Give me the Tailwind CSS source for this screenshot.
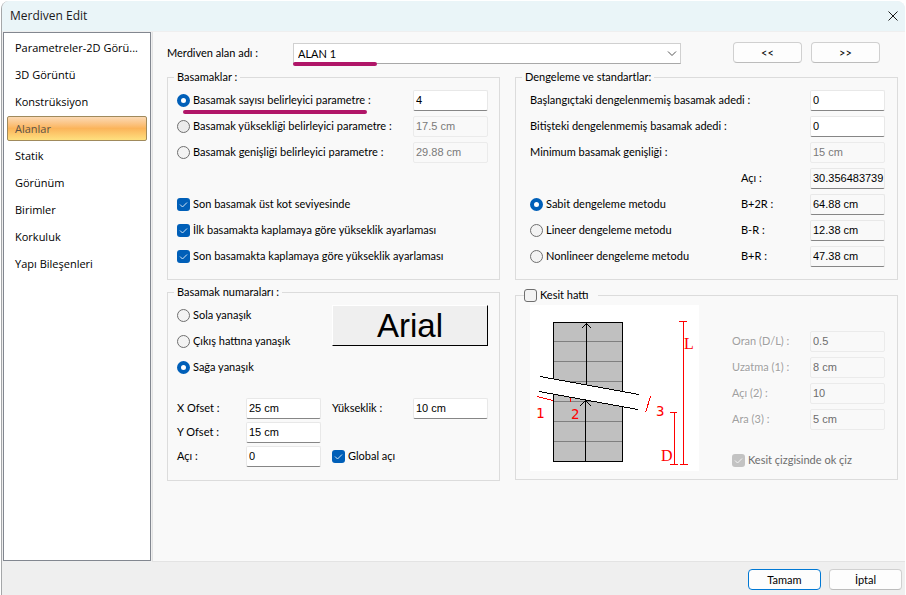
<!DOCTYPE html>
<html lang="tr">
  <head>
    <meta charset="UTF-8" />
    <meta name="viewport" content="width=device-width, initial-scale=1.0" />
    <title>Merdiven Edit</title>
    <script src="https://cdn.jsdelivr.net/npm/@tailwindcss/browser@4"></script>
  </head>
  <body class="h-screen overflow-hidden bg-white pt-px pr-px pl-px text-[11px] leading-4 text-black font-[Lato,'Liberation_Sans',sans-serif]">
    <div class="flex h-full flex-col overflow-hidden rounded-t-lg border-l border-[#a5a7a9] bg-[#efefef]">
      <!-- title bar -->
      <header class="flex h-[30px] shrink-0 items-center justify-between bg-[#eaf5f8] pr-[6px] pl-2 font-['Open_Sans','Noto_Sans',sans-serif]">
        <h1 class="text-xs text-[#1a1a1a]">Merdiven Edit</h1>
        <button type="button" aria-label="Kapat" class="p-px">
          <svg class="size-[10px]" viewBox="0 0 10 10" fill="none" stroke="#1a1a1a"><path d="M0.5 0.5l9 9M9.5 0.5l-9 9" /></svg>
        </button>
      </header>

      <div class="flex min-h-0 flex-1 pt-px pl-px">
        <nav class="mb-px flex w-[148px] shrink-0 flex-col gap-[2px] border border-[#828790] bg-white px-[3px] py-[2px] font-['Open_Sans','Noto_Sans',sans-serif]">
          <a href="#" class="flex h-[25px] items-center px-2">Parametreler-2D Görü...</a>
          <a href="#" class="flex h-[25px] items-center px-2">3D Görüntü</a>
          <a href="#" class="flex h-[25px] items-center px-2">Konstrüksiyon</a>
          <a href="#" aria-current="page" class="flex h-[25px] items-center rounded-xs border border-[#a08a5c] bg-linear-to-b from-[#fbd9b3] via-[#fbb45a] to-[#fee07f] px-[7px] text-[#5c5347]">Alanlar</a>
          <a href="#" class="flex h-[25px] items-center px-2">Statik</a>
          <a href="#" class="flex h-[25px] items-center px-2">Görünüm</a>
          <a href="#" class="flex h-[25px] items-center px-2">Birimler</a>
          <a href="#" class="flex h-[25px] items-center px-2">Korkuluk</a>
          <a href="#" class="flex h-[25px] items-center px-2">Yapı Bileşenleri</a>
        </nav>

        <main class="ml-px min-w-0 flex-1 border-b border-l border-[#e3e3e3] bg-[#f9f9f9] pr-[7px] pl-[14px] [&_input]:font-['Liberation_Sans',Arial,sans-serif]">
          <div class="flex h-[37px] items-start pt-[10px] pr-[18px]">
            <label for="area" class="w-[126px] pt-[3px]">Merdiven alan adı :</label>
            <div class="relative mt-px mr-[52px] flex-1">
              <select id="area" class="block h-[21px] w-full appearance-none border border-[#d0d0d0] border-b-[#a8a8a8] bg-white pl-1">
                <option>ALAN 1</option>
              </select>
              <svg class="pointer-events-none absolute top-2 right-1 h-[6px] w-[10px]" viewBox="0 0 10 6" fill="none" stroke="#555"><path d="M1 0.5l4 4l4-4" /></svg>
              <div class="absolute top-[19px] left-0 h-1 w-[84px] rounded-full bg-[#b01668]"></div>
            </div>
            <button type="button" class="h-[21px] w-[69px] rounded border border-[#d0d0d0] border-b-[#bcbcbc] bg-[#fdfdfd]">&lt;&lt;</button>
            <button type="button" class="ml-[9px] h-[21px] w-[69px] rounded border border-[#d0d0d0] border-b-[#bcbcbc] bg-[#fdfdfd]">&gt;&gt;</button>
          </div>

          <div class="grid grid-cols-[333fr_383fr] gap-x-[15px]">
            <div class="flex flex-col gap-1">
              <fieldset class="min-w-0 border border-[#dcdcdc] pt-[2px] pr-[11px] pb-[10px] pl-[9px]">
                <legend class="-ml-[3px] px-[3px]">Basamaklar :</legend>
                <div class="relative flex h-[26px] items-center">
                  <input type="radio" name="param" id="p1" checked class="mr-[3px] size-[13px] appearance-none rounded-full border border-[#6f6f6f] bg-[#f3f3f3] checked:border-4 checked:border-[#005fb8] checked:bg-white" />
                  <label for="p1" class="flex-1">Basamak sayısı belirleyici parametre :</label>
                  <input aria-label="Basamak sayısı" value="4" class="h-[21px] w-[75px] rounded-xs border border-[#e8e8e8] border-b-[#868686] bg-white pl-[2px]" />
                  <div class="absolute top-[23px] left-[6px] h-1 w-[184px] rounded-full bg-[#b01668]"></div>
                </div>
                <div class="flex h-[26px] items-center">
                  <input type="radio" name="param" id="p2" class="mr-[3px] size-[13px] appearance-none rounded-full border border-[#6f6f6f] bg-[#ececec] checked:border-4 checked:border-[#005fb8] checked:bg-white" />
                  <label for="p2" class="flex-1">Basamak yüksekliği belirleyici parametre :</label>
                  <input aria-label="Basamak yüksekliği" value="17.5 cm" disabled class="h-[21px] w-[75px] rounded-xs border border-[#ebebeb] pl-[2px] text-[#7a7a7a]" />
                </div>
                <div class="flex h-[26px] items-center">
                  <input type="radio" name="param" id="p3" class="mr-[3px] size-[13px] appearance-none rounded-full border border-[#6f6f6f] bg-[#f3f3f3] checked:border-4 checked:border-[#005fb8] checked:bg-white" />
                  <label for="p3" class="flex-1">Basamak genişliği belirleyici parametre :</label>
                  <input aria-label="Basamak genişliği" value="29.88 cm" disabled class="h-[21px] w-[75px] rounded-xs border border-[#ebebeb] pl-[2px] text-[#7a7a7a]" />
                </div>
                <div class="mt-[26px] flex h-[26px] items-center gap-[3px]">
                  <span class="grid size-[13px]">
                    <input type="checkbox" id="c1" checked class="size-[13px] appearance-none rounded-[3px] border border-[#6f6f6f] [grid-area:1/1] checked:border-0 checked:bg-[#005fb8]" />
                    <svg class="pointer-events-none size-[13px] [grid-area:1/1]" viewBox="0 0 13 13" fill="none" stroke="#d5e6f5"><path d="M3 6.5l2.5 2.5L10 4.5" /></svg>
                  </span>
                  <label for="c1">Son basamak üst kot seviyesinde</label>
                </div>
                <div class="flex h-[26px] items-center gap-[3px]">
                  <span class="grid size-[13px]">
                    <input type="checkbox" id="c2" checked class="size-[13px] appearance-none rounded-[3px] border border-[#6f6f6f] [grid-area:1/1] checked:border-0 checked:bg-[#005fb8]" />
                    <svg class="pointer-events-none size-[13px] [grid-area:1/1]" viewBox="0 0 13 13" fill="none" stroke="#d5e6f5"><path d="M3 6.5l2.5 2.5L10 4.5" /></svg>
                  </span>
                  <label for="c2">İlk basamakta kaplamaya göre yükseklik ayarlaması</label>
                </div>
                <div class="flex h-[26px] items-center gap-[3px]">
                  <span class="grid size-[13px]">
                    <input type="checkbox" id="c3" checked class="size-[13px] appearance-none rounded-[3px] border border-[#6f6f6f] [grid-area:1/1] checked:border-0 checked:bg-[#005fb8]" />
                    <svg class="pointer-events-none size-[13px] [grid-area:1/1]" viewBox="0 0 13 13" fill="none" stroke="#d5e6f5"><path d="M3 6.5l2.5 2.5L10 4.5" /></svg>
                  </span>
                  <label for="c3">Son basamakta kaplamaya göre yükseklik ayarlaması</label>
                </div>
              </fieldset>

              <fieldset class="min-w-0 border border-[#dcdcdc] pt-[2px] pr-[11px] pb-3 pl-[9px]">
                <legend class="-ml-[3px] px-[3px]">Basamak numaraları :</legend>
                <div class="flex items-start justify-between">
                  <div>
                    <div class="flex h-[26px] items-center gap-[3px]">
                      <input type="radio" name="align" id="a1" class="size-[13px] appearance-none rounded-full border border-[#6f6f6f] bg-[#f3f3f3] checked:border-4 checked:border-[#005fb8] checked:bg-white" />
                      <label for="a1">Sola yanaşık</label>
                    </div>
                    <div class="flex h-[26px] items-center gap-[3px]">
                      <input type="radio" name="align" id="a2" class="size-[13px] appearance-none rounded-full border border-[#6f6f6f] bg-[#f3f3f3] checked:border-4 checked:border-[#005fb8] checked:bg-white" />
                      <label for="a2">Çıkış hattına yanaşık</label>
                    </div>
                    <div class="flex h-[26px] items-center gap-[3px]">
                      <input type="radio" name="align" id="a3" checked class="size-[13px] appearance-none rounded-full border border-[#6f6f6f] bg-[#f3f3f3] checked:border-4 checked:border-[#005fb8] checked:bg-white" />
                      <label for="a3">Sağa yanaşık</label>
                    </div>
                  </div>
                  <button type="button" class="mt-[3px] h-[41px] w-[156px] border border-white border-r-black border-b-black bg-[#efefef] font-['Liberation_Sans',Arial,sans-serif] text-[33px] leading-9">Arial</button>
                </div>
                <div class="mt-4 grid auto-rows-[24px] grid-cols-[69px_75px_1fr_75px] items-center">
                  <label for="xo">X Ofset :</label>
                  <input id="xo" value="25 cm" class="h-[21px] w-[75px] rounded-xs border border-[#e8e8e8] border-b-[#868686] bg-white pl-[2px]" />
                  <label for="yk" class="pl-[11px]">Yükseklik :</label>
                  <input id="yk" value="10 cm" class="h-[21px] w-[75px] rounded-xs border border-[#e8e8e8] border-b-[#868686] bg-white pl-[2px]" />
                  <label for="yo">Y Ofset :</label>
                  <input id="yo" value="15 cm" class="col-span-3 h-[21px] w-[75px] rounded-xs border border-[#e8e8e8] border-b-[#868686] bg-white pl-[2px]" />
                  <label for="ac">Açı :</label>
                  <input id="ac" value="0" class="h-[21px] w-[75px] rounded-xs border border-[#e8e8e8] border-b-[#868686] bg-white pl-[2px]" />
                  <div class="col-span-2 flex items-center gap-[3px] pl-[11px]">
                    <span class="grid size-[13px]">
                      <input type="checkbox" id="ga" checked class="size-[13px] appearance-none rounded-[3px] border border-[#6f6f6f] [grid-area:1/1] checked:border-0 checked:bg-[#005fb8]" />
                      <svg class="pointer-events-none size-[13px] [grid-area:1/1]" viewBox="0 0 13 13" fill="none" stroke="#d5e6f5"><path d="M3 6.5l2.5 2.5L10 4.5" /></svg>
                    </span>
                    <label for="ga">Global açı</label>
                  </div>
                </div>
              </fieldset>
            </div>

            <div class="flex flex-col gap-[7px]">
              <fieldset class="min-w-0 border border-[#dcdcdc] pt-[2px] pr-3 pb-[10px] pl-[14px]">
                <legend class="-ml-[8px] px-[3px]">Dengeleme ve standartlar:</legend>
                <div class="flex h-[26px] items-center justify-between">
                  <label for="d1">Başlangıçtaki dengelenmemiş basamak adedi :</label>
                  <input id="d1" value="0" class="h-[21px] w-[75px] rounded-xs border border-[#e8e8e8] border-b-[#868686] bg-white pl-[2px]" />
                </div>
                <div class="flex h-[26px] items-center justify-between">
                  <label for="d2">Bitişteki dengelenmemiş basamak adedi :</label>
                  <input id="d2" value="0" class="h-[21px] w-[75px] rounded-xs border border-[#e8e8e8] border-b-[#868686] bg-white pl-[2px]" />
                </div>
                <div class="flex h-[26px] items-center justify-between">
                  <label for="d3">Minimum basamak genişliği :</label>
                  <input id="d3" value="15 cm" disabled class="h-[21px] w-[75px] rounded-xs border border-[#ebebeb] pl-[2px] text-[#7a7a7a]" />
                </div>
                <div class="flex h-[26px] items-center justify-end">
                  <label for="r1" class="w-[69px]">Açı :</label>
                  <input id="r1" value="30.356483739" readonly class="h-[21px] w-[75px] rounded-xs border border-[#e8e8e8] border-b-[#868686] pl-[2px]" />
                </div>
                <div class="flex h-[26px] items-center">
                  <input type="radio" name="method" id="m1" checked class="mr-[3px] size-[13px] appearance-none rounded-full border border-[#6f6f6f] bg-[#f3f3f3] checked:border-4 checked:border-[#005fb8] checked:bg-white" />
                  <label for="m1" class="flex-1">Sabit dengeleme metodu</label>
                  <label for="r2" class="w-[69px]">B+2R :</label>
                  <input id="r2" value="64.88 cm" readonly class="h-[21px] w-[75px] rounded-xs border border-[#e8e8e8] border-b-[#868686] pl-[2px]" />
                </div>
                <div class="flex h-[26px] items-center">
                  <input type="radio" name="method" id="m2" class="mr-[3px] size-[13px] appearance-none rounded-full border border-[#6f6f6f] bg-[#f3f3f3] checked:border-4 checked:border-[#005fb8] checked:bg-white" />
                  <label for="m2" class="flex-1">Lineer dengeleme metodu</label>
                  <label for="r3" class="w-[69px]">B-R :</label>
                  <input id="r3" value="12.38 cm" readonly class="h-[21px] w-[75px] rounded-xs border border-[#e8e8e8] border-b-[#868686] pl-[2px]" />
                </div>
                <div class="flex h-[26px] items-center">
                  <input type="radio" name="method" id="m3" class="mr-[3px] size-[13px] appearance-none rounded-full border border-[#6f6f6f] bg-[#f3f3f3] checked:border-4 checked:border-[#005fb8] checked:bg-white" />
                  <label for="m3" class="flex-1">Nonlineer dengeleme metodu</label>
                  <label for="r4" class="w-[69px]">B+R :</label>
                  <input id="r4" value="47.38 cm" readonly class="h-[21px] w-[75px] rounded-xs border border-[#e8e8e8] border-b-[#868686] pl-[2px]" />
                </div>
              </fieldset>

              <fieldset class="min-w-0 border border-[#dcdcdc] pt-[2px] pr-3 pb-[6px] pl-[14px]">
                <legend class="-ml-[6px] pr-[9px]">
                  <span class="flex items-center gap-[3px]">
                    <input type="checkbox" id="kh" class="size-[13px] appearance-none rounded-[3px] border border-[#6f6f6f] bg-[#f3f3f3] checked:bg-[#005fb8]" />
                    <label for="kh">Kesit hattı</label>
                  </span>
                </legend>
                <div class="flex justify-between">
                  <!-- section line diagram -->
                  <svg class="h-[166px] w-[169px] bg-white" viewBox="0 0 169 166" fill="none" shape-rendering="crispEdges">
                    <path d="M23.5 17.5H92.5V86.5L23.5 73.5ZM23.5 88.5L92.5 101.5V156.5H23.5Z" fill="#c0c0c0" />
                    <path d="M24 36.5H92M24 56.5H92M40 76.5H92M24 96.5H66M24 116.5H92M24 136.5H92" stroke="#808080" />
                    <path d="M23.5 74V17.5H92.5V86M23.5 89V156.5H92.5V102M56.5 80V18M51.5 23.5l5-5l5 5M55.5 156V96M49.5 101.5l6-6l6 6M10 71.5L109 89.5M9 86.5L108 104.5" stroke="#000" />
                    <path d="M7 91.5L23 95.5M40.5 93V97M120.5 91.5L115.5 107.5M149 16.5H157M153.5 16V159.5M140 107.5H147M144.5 107V159.5M140 159.5H148M150 159.5H158" stroke="#f00" />
                    <g fill="#f00" class="font-['DejaVu_Sans_Mono',monospace] text-[14px]">
                      <text x="6" y="113">1</text>
                      <text x="41" y="114">2</text>
                      <text x="126" y="111">3</text>
                    </g>
                    <g fill="#f00" class="font-['Liberation_Serif',serif] text-[16px]">
                      <text x="154" y="44">L</text>
                      <text x="131" y="156">D</text>
                    </g>
                  </svg>
                  <div class="w-[153px] pt-[23px] text-[#a0a0a0]">
                    <div class="flex h-[26px] items-center justify-between">
                      <label for="k1" class="text-shadow-[1px_1px_0_#fff]">Oran (D/L) :</label>
                      <input id="k1" value="0.5" disabled class="h-[21px] w-[75px] rounded-xs border border-[#ebebeb] pl-[2px] text-[#6d6d6d]" />
                    </div>
                    <div class="flex h-[26px] items-center justify-between">
                      <label for="k2" class="text-shadow-[1px_1px_0_#fff]">Uzatma (1) :</label>
                      <input id="k2" value="8 cm" disabled class="h-[21px] w-[75px] rounded-xs border border-[#ebebeb] pl-[2px] text-[#6d6d6d]" />
                    </div>
                    <div class="flex h-[26px] items-center justify-between">
                      <label for="k3" class="text-shadow-[1px_1px_0_#fff]">Açı (2) :</label>
                      <input id="k3" value="10" disabled class="h-[21px] w-[75px] rounded-xs border border-[#ebebeb] pl-[2px] text-[#6d6d6d]" />
                    </div>
                    <div class="flex h-[26px] items-center justify-between">
                      <label for="k4" class="text-shadow-[1px_1px_0_#fff]">Ara (3) :</label>
                      <input id="k4" value="5 cm" disabled class="h-[21px] w-[75px] rounded-xs border border-[#ebebeb] pl-[2px] text-[#6d6d6d]" />
                    </div>
                    <div class="mt-[15px] flex h-[26px] items-center gap-[3px]">
                      <span class="grid size-[13px]">
                        <input type="checkbox" id="k5" checked disabled class="size-[13px] appearance-none rounded-[3px] bg-[#c3c3c3] [grid-area:1/1]" />
                        <svg class="pointer-events-none size-[13px] [grid-area:1/1]" viewBox="0 0 13 13" fill="none" stroke="#f5f5f5"><path d="M3 6.5l2.5 2.5L10 4.5" /></svg>
                      </span>
                      <label for="k5" class="text-[#6d6d6d]">Kesit çizgisinde ok çiz</label>
                    </div>
                  </div>
                </div>
              </fieldset>
            </div>
          </div>
        </main>
      </div>

      <footer class="flex h-[33px] shrink-0 items-start justify-end gap-2 pt-[7px] pr-[3px]">
        <button type="button" class="h-[21px] w-[73px] rounded border border-[#0078d4] bg-[#fdfdfd]">Tamam</button>
        <button type="button" class="h-[21px] w-[73px] rounded border border-[#d0d0d0] border-b-[#bcbcbc] bg-[#fdfdfd]">İptal</button>
      </footer>
    </div>
  </body>
</html>
